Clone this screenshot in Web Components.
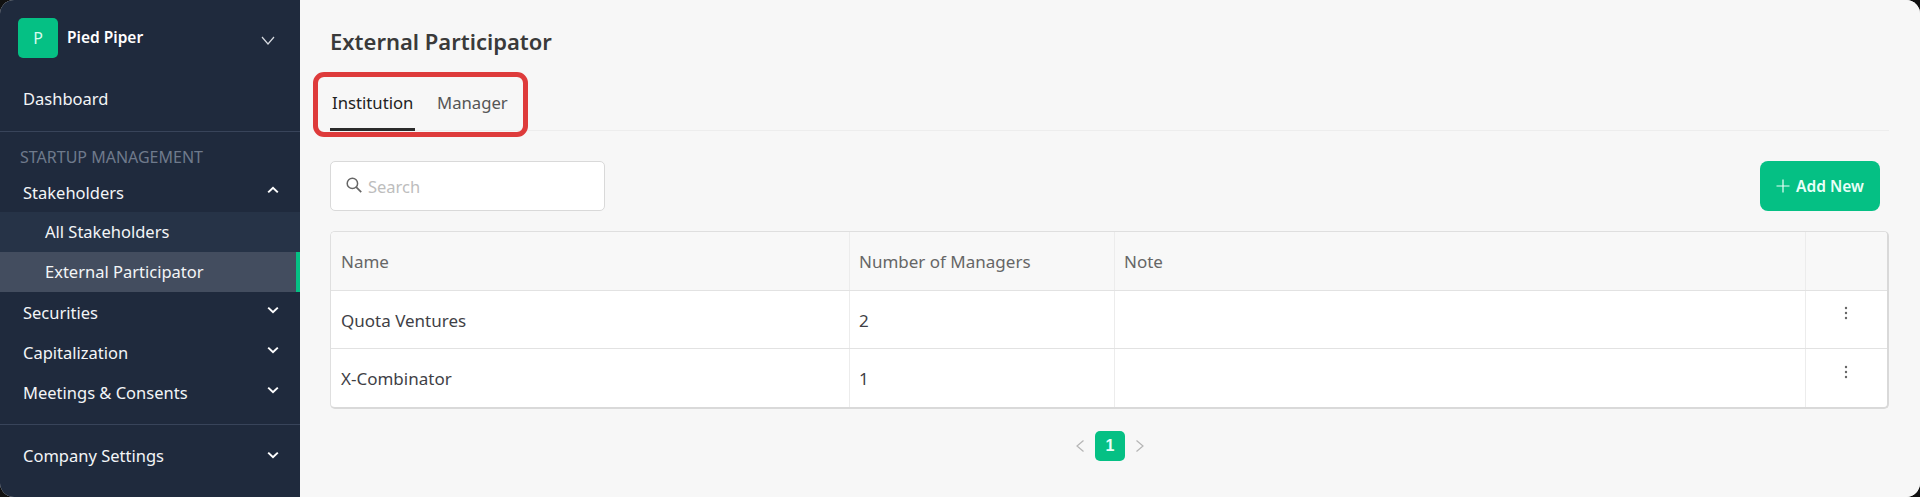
<!DOCTYPE html>
<html>
<head>
<meta charset="utf-8">
<style>
  html, body { margin: 0; height: 100%; background: #111; }
  body { font-family: "Noto Sans", sans-serif; overflow: hidden; }
</style>
</head>
<body>
<app-shell>
  <side-nav slot="side"></side-nav>
  <participator-page slot="main"></participator-page>
</app-shell>

<script>
(function () {
  const CHEVRON_DOWN = `<svg width="14" height="14" viewBox="0 0 14 14"><path d="M2.2 4.6 7 9.2l4.8-4.6" fill="none" stroke="#fff" stroke-width="2"/></svg>`;
  const CHEVRON_UP = `<svg width="14" height="14" viewBox="0 0 14 14"><path d="M2.2 9.4 7 4.8l4.8 4.6" fill="none" stroke="#fff" stroke-width="2"/></svg>`;

  class AppShell extends HTMLElement {
    constructor() {
      super();
      this.attachShadow({ mode: "open" });
      this.shadowRoot.innerHTML = `
        <style>
        :host{
            display:flex;
            width:1920px;
            height:497px;
            overflow:hidden;
            border-radius:14px;
            background:#f7f7f7;
        }
        </style>
        <slot name="side"></slot>
        <slot name="main"></slot>
      `;
    }
  }

  class SideNav extends HTMLElement {
    constructor() {
      super();
      this.attachShadow({ mode: "open" });
      this.shadowRoot.innerHTML = `
        <style>
        :host{
            display:block;
            width:300px;
            flex:none;
            height:497px;
            background:#1f2a3d;
            color:#f3f5f7;
            font-size:16.5px;
        }
        .brand{
            display:flex;
            align-items:center;
            height:76px;
            padding-left:18px;
            padding-right:24px;
        }
        .logo{
            width:40px;
            height:40px;
            border-radius:5px;
            background:#05c084;
            color:#d8fbef;
            font-size:16px;
            display:flex;
            align-items:center;
            justify-content:center;
        }
        .brand-name{
            margin-left:9px;
            font-size:15.5px;
            font-weight:600;
            color:#fff;
            flex:1;
            margin-top:-2px;
        }
        .brand svg{ margin-top:4px; }
        .row{
            display:flex;
            align-items:center;
            justify-content:space-between;
            height:40px;
            padding:0 20px 0 23px;
        }
        .dash{ height:44px; margin-bottom:11px; }
        hr{
            border:none;
            border-top:1px solid #38445a;
            margin:0;
        }
        .group{
            color:#6f7a8c;
            font-size:16px;
            padding-left:20px;
            height:37px;
            padding-top:13px;
            line-height:24px;
            box-sizing:content-box;
        }
        .row.top{ margin-top:-10px; }
        .sub{
            display:block;
            background:#263347;
        }
        .sub div{
            height:40px;
            line-height:40px;
            padding-left:45px;
        }
        .sub .on{
            background:#434d5f;
            border-right:4px solid #05c084;
        }
        .items{ margin-bottom:12px; }
        .items .row svg{ margin-top:-4px; }
        .bottom{ margin-top:10px; }
        </style>
        <div class="brand">
          <div class="logo">P</div>
          <div class="brand-name">Pied Piper</div>
          <svg width="16" height="16" viewBox="0 0 16 16"><path d="M2 5l6 7 6-7" fill="none" stroke="#d6dae0" stroke-width="1.2"/></svg>
        </div>
        <div class="row dash"><span>Dashboard</span></div>
        <hr>
        <div class="group">STARTUP MANAGEMENT</div>
        <div class="items">
          <div class="row top"><span>Stakeholders</span>${CHEVRON_UP}</div>
          <div class="sub">
            <div>All Stakeholders</div>
            <div class="on">External Participator</div>
          </div>
          <div class="row"><span>Securities</span>${CHEVRON_DOWN}</div>
          <div class="row"><span>Capitalization</span>${CHEVRON_DOWN}</div>
          <div class="row"><span>Meetings &amp; Consents</span>${CHEVRON_DOWN}</div>
        </div>
        <hr>
        <div class="row bottom"><span>Company Settings</span>${CHEVRON_DOWN}</div>
      `;
    }
  }

  class DataTable extends HTMLElement {
    constructor() {
      super();
      this.attachShadow({ mode: "open" });
    }

    connectedCallback() {
      const rows = [
        ["Quota Ventures", "2", ""],
        ["X-Combinator", "1", ""],
      ];

      let html = `
        <style>
        :host{
            display:block;
            width:100%;
            box-sizing:border-box;
            border:1px solid #dfdfdf;
            border-bottom:2px solid #d9d9d9;
            border-right:2px solid #d9d9d9;
            border-radius:5px;
            overflow:hidden;
            background:#fff;
            font-size:17px;
            color:#3f3f46;
        }
        .tr{
            display:grid;
            grid-template-columns:519px 265px 691px 1fr;
            height:58px;
            box-sizing:border-box;
            border-top:1px solid #e2e2e2;
        }
        .tr:last-child{ height:59px; }
        .tr.head{
            background:#f8f8f8;
            color:#666;
            border-top:none;
        }
        .tr > div{
            display:flex;
            align-items:center;
            padding-left:9px;
            border-right:1px solid #ececec;
        }
        .tr:not(.head) > div{ padding-top:1px; }
        .tr > div:first-child{ padding-left:10px; }
        .tr > div:last-child{
            border-right:none;
            justify-content:center;
            padding-left:0;
        }
        svg{ margin-top:-14px; margin-left:-2px; }
        </style>
        <div class="tr head"><div>Name</div><div>Number of Managers</div><div>Note</div><div></div></div>
      `;

      rows.forEach((row) => {
        html += `<div class="tr">`;
        row.forEach((cell) => {
          html += `<div>${cell}</div>`;
        });
        html += `<div><svg width="4" height="14" viewBox="0 0 4 14" fill="#666"><circle cx="2" cy="2" r="1.2"/><circle cx="2" cy="7" r="1.2"/><circle cx="2" cy="12" r="1.2"/></svg></div></div>`;
      });

      this.shadowRoot.innerHTML = html;
    }
  }

  class ParticipatorPage extends HTMLElement {
    constructor() {
      super();
      this.attachShadow({ mode: "open" });
      this.shadowRoot.innerHTML = `
        <style>
        :host{
            display:block;
            position:relative;
            width:1620px;
            height:497px;
            box-sizing:border-box;
            padding:0 31px 0 30px;
            background:#f7f7f7;
        }
        h1{
            margin:0;
            padding-top:24px;
            height:48px;
            font-size:22px;
            line-height:34px;
            font-weight:600;
            color:#3a3a3a;
        }
        .tabs{
            display:flex;
            height:58px;
            border-bottom:1px solid #ededed;
            font-size:16.7px;
            color:#555;
        }
        .tab{
            box-sizing:border-box;
            padding:0 2px;
            margin-right:20px;
            line-height:62px;
            height:59px;
        }
        .tab.on{
            width:85px;
            color:#222;
            border-bottom:3px solid #2b2b2b;
        }
        .mark{
            position:absolute;
            left:13px;
            top:72px;
            width:215px;
            height:65px;
            box-sizing:border-box;
            border:5px solid #de3b3b;
            border-radius:11px;
        }
        .bar{
            display:flex;
            justify-content:space-between;
            align-items:center;
            margin-top:30px;
            margin-bottom:20px;
            padding-right:9px;
        }
        .search{
            width:275px;
            height:50px;
            box-sizing:border-box;
            border:1px solid #d9d9d9;
            border-radius:5px;
            background:#fff;
            display:flex;
            align-items:center;
            padding-left:14px;
            color:#bdbdbd;
            font-size:16.5px;
        }
        .search svg{ margin-right:5px; margin-top:-3px; }
        .add{
            width:120px;
            height:50px;
            border-radius:8px;
            background:#05c084;
            color:#e9fff8;
            font-weight:600;
            font-size:15.5px;
            display:flex;
            align-items:center;
            justify-content:center;
            gap:6px;
        }
        .pager{
            display:flex;
            align-items:center;
            justify-content:center;
            gap:10px;
            margin-top:22px;
            padding-left:1px;
        }
        .num{
            width:30px;
            height:30px;
            border-radius:5px;
            background:#05c084;
            color:#e8fff8;
            font-family:"Liberation Sans", sans-serif;
            font-weight:700;
            font-size:16px;
            display:flex;
            align-items:center;
            justify-content:center;
        }
        </style>
        <h1>External Participator</h1>
        <div class="tabs">
          <div class="tab on">Institution</div>
          <div class="tab">Manager</div>
        </div>
        <div class="mark"></div>
        <div class="bar">
          <div class="search">
            <svg width="18" height="18" viewBox="0 0 18 18"><circle cx="7.4" cy="7.4" r="5.2" fill="none" stroke="#666" stroke-width="1.5"/><path d="M11.2 11.2l5 5" stroke="#666" stroke-width="1.7" fill="none"/></svg>
            <span>Search</span>
          </div>
          <div class="add">
            <svg width="14" height="14" viewBox="0 0 14 14"><path d="M7 .5v13M.5 7h13" stroke="#e9fff8" stroke-width="1.2" fill="none"/></svg>
            <span>Add New</span>
          </div>
        </div>
        <data-table></data-table>
        <div class="pager">
          <svg width="10" height="14" viewBox="0 0 10 14"><path d="M8.5 1.5 2 7l6.5 5.5" fill="none" stroke="#b5b5b5" stroke-width="1.2"/></svg>
          <div class="num">1</div>
          <svg width="10" height="14" viewBox="0 0 10 14"><path d="M1.5 1.5 8 7l-6.5 5.5" fill="none" stroke="#b5b5b5" stroke-width="1.2"/></svg>
        </div>
      `;
    }
  }

  customElements.define("app-shell", AppShell);
  customElements.define("side-nav", SideNav);
  customElements.define("data-table", DataTable);
  customElements.define("participator-page", ParticipatorPage);
})();
</script>
</body>
</html>
